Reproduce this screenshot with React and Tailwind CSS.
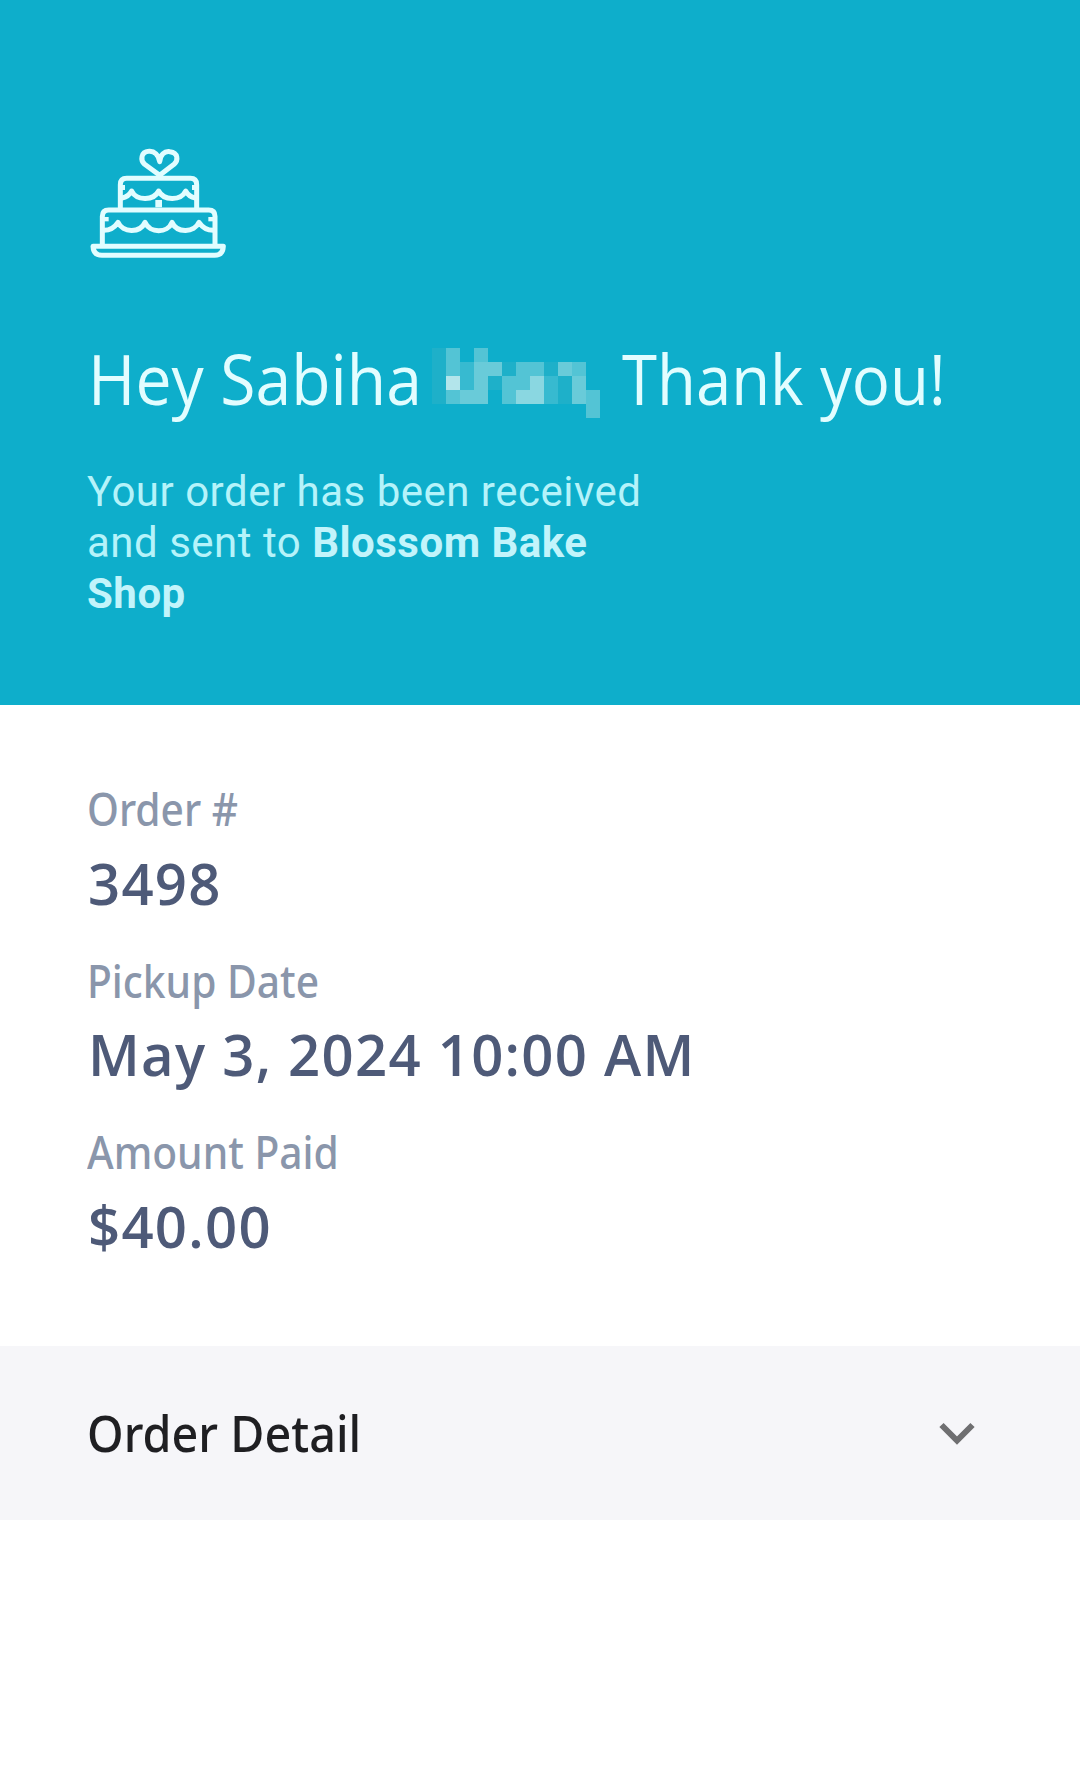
import React, { useState } from 'react';
import clsx from 'clsx';

const details = [
  { label: 'Order #', value: '3498' },
  { label: 'Pickup Date', value: 'May 3, 2024 10:00 AM' },
  { label: 'Amount Paid', value: '$40.00' },
];

const shades = {
  '.': 'bg-transparent',
  a: 'bg-[#1eb0c9]',
  b: 'bg-[#37bad0]',
  c: 'bg-[#53c4d5]',
  d: 'bg-[#69cbd9]',
  e: 'bg-[#8ad7e1]',
  f: 'bg-[#b3e5eb]',
};

const mosaic = [
  'ac.c........',
  'acbddaccadc.',
  'afbdaccebad.',
  'acdd.ceebadc',
  '...........c',
];

const CakeIcon = () => (
  <svg
    className="ml-px h-28 w-[140px]"
    viewBox="24 24 420 336"
    fill="none"
    stroke="#e2fdff"
    strokeWidth="15"
    strokeLinecap="round"
    strokeLinejoin="round"
  >
    <path d="M239 106 L194 73 C180 60 183 36 206 34 C223 32 236 45 239 65 C241 45 253 32 270 35 C294 38 296 60 282 73 Z" />
    <path strokeLinecap="butt" d="M121 210 V134 Q121 115 140 115 H331 Q350 115 350 134 V210" />
    <path strokeLinecap="butt" d="M67 319 V229 Q67 210 86 210 H386 Q405 210 405 229 V319" />
    <path d="M126 174 C138 172 149 164 155 153 C169 182 220 184 236 153 C252 184 303 182 317 153 C323 164 334 172 346 174" />
    <path d="M72 271 C88 271 104 262 114 247 C128 279 180 281 195 247 C210 281 262 281 276 247 C291 281 343 279 357 247 C367 262 383 271 400 271" />
    <path d="M39 319 H430 C429 337 420 346 404 346 H66 C50 346 40 337 39 319 Z" />
    <g fill="#e2fdff" stroke="none">
      <rect x="226" y="180" width="20" height="22" />
      <rect x="121" y="135" width="14" height="15" />
      <rect x="336" y="135" width="14" height="15" />
      <rect x="70" y="231" width="16" height="13" />
      <rect x="385" y="231" width="16" height="13" />
    </g>
  </svg>
);

const BlurredName = () => (
  <div className="mt-[10px] grid h-[70px] w-[168px] grid-cols-12 grid-rows-5">
    {mosaic.join('').split('').map((cell, index) => (
      <span key={index} className={shades[cell]} />
    ))}
  </div>
);

const Hero = () => (
  <header className="h-[705px] bg-[#0eaecb] px-[87px] pt-[148px]">
    <CakeIcon />
    <h1 className="mt-[78px] flex h-20 pl-px text-[70px] leading-[80px] font-normal whitespace-nowrap text-[#e2fdff]">
      <span className="w-[344px] origin-left scale-x-[0.918]">Hey Sabiha</span>
      <BlurredName />
      <span className="ml-[22px] origin-left scale-x-[0.907]">Thank you!</span>
    </h1>
    <p className="mt-[48px] w-[600px] font-['Roboto',sans-serif] text-[42px] leading-[51.2px] tracking-[0.5px] text-[#b5f3fa]">
      Your order has been received and sent to <strong className="font-bold text-[#c2f4fb]">Blossom Bake Shop</strong>
    </p>
  </header>
);

const Detail = ({ label, value }) => (
  <div className="whitespace-nowrap">
    <dt className="origin-left scale-x-[0.905] font-['Noto_Sans',sans-serif] text-[45px] leading-[60px] font-medium text-[#8a96ab]">{label}</dt>
    <dd className="mt-[3.5px] ml-px origin-left scale-x-[0.97] text-[58px] leading-[80px] font-semibold tracking-[1.3px] text-[#4e5a78]">{value}</dd>
  </div>
);

const App = () => {
  const [open, setOpen] = useState(false);

  return (
    <main className="min-h-[1769px] bg-white font-['Open_Sans','Noto_Sans',sans-serif]">
      <Hero />

      <dl className="flex h-[641px] flex-col gap-7 px-[87px] pt-[74px]">
        {details.map((item) => (
          <Detail key={item.label} {...item} />
        ))}
      </dl>

      <button
        onClick={() => setOpen(!open)}
        className="flex h-[174px] w-full items-center justify-between bg-[#f6f6f9] pr-[105px] pl-[87px]"
      >
        <span className="origin-left scale-x-[0.935] font-['Noto_Sans',sans-serif] text-[50px] leading-[70px] font-medium text-[#1f1f22]">Order Detail</span>
        <svg className={clsx('mt-0.5 h-6 w-9', open && 'rotate-180')} viewBox="0 0 36 24" fill="none" stroke="#6f6f71" strokeWidth="6">
          <path d="M2.5 3 L18 18.5 L33.5 3" />
        </svg>
      </button>
    </main>
  );
};

export default App;
